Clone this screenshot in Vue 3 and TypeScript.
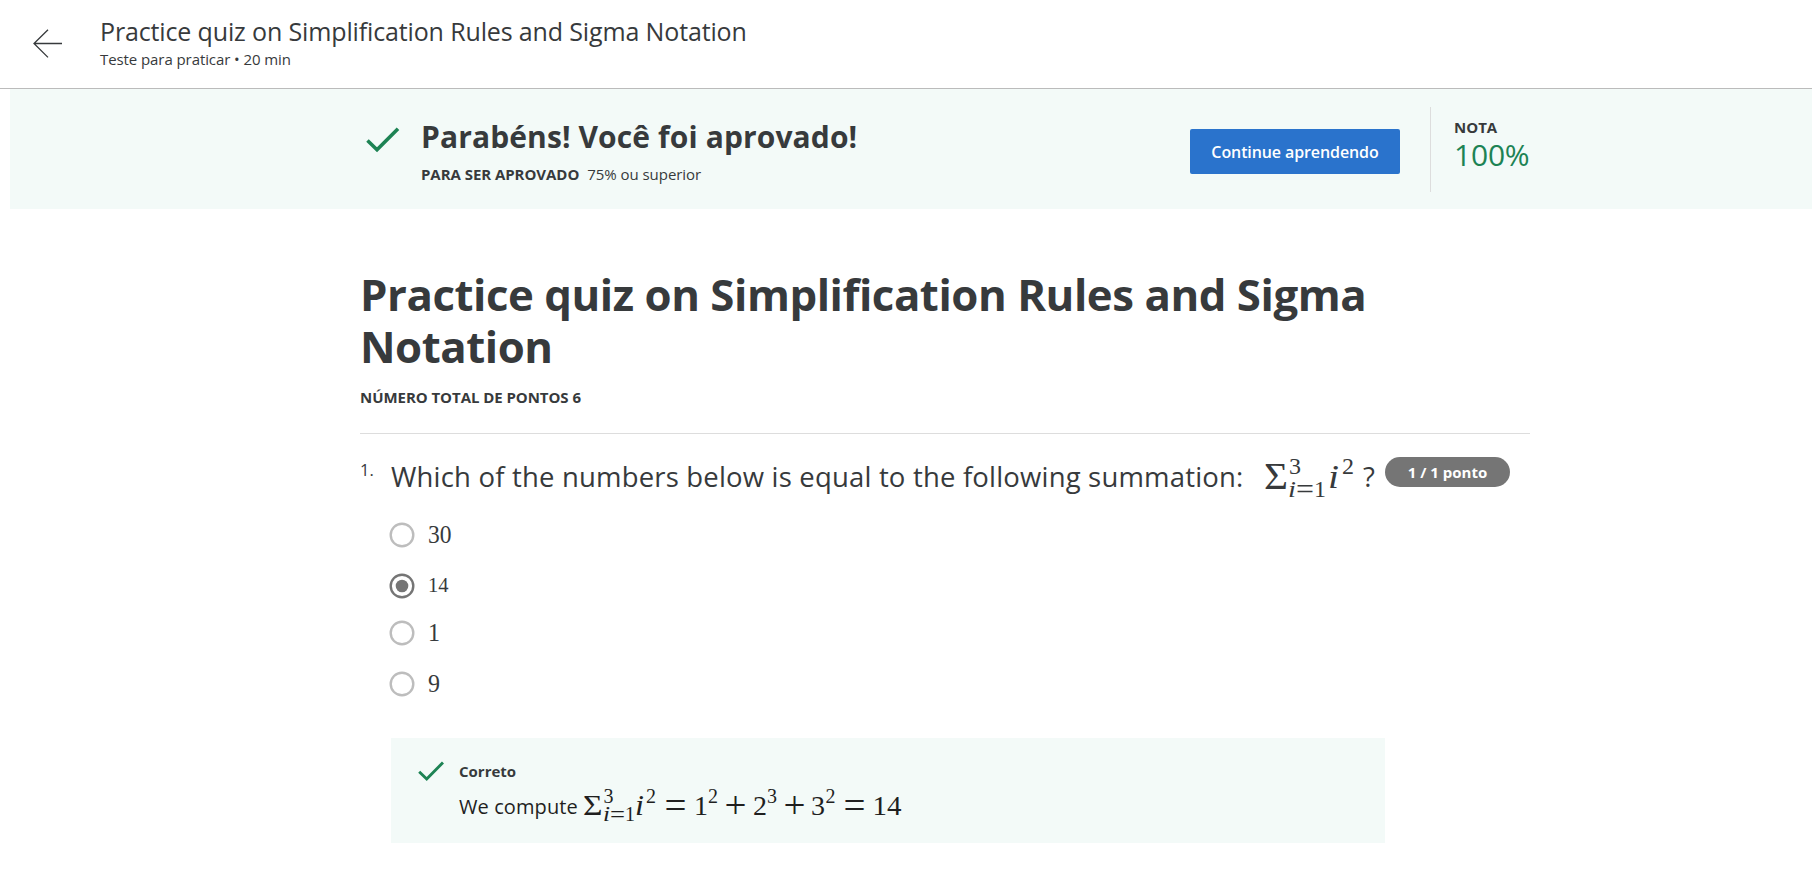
<script setup lang="ts">
interface Glyph {
  text: string
  x: number
  y: number
  size: number
  width?: number
  italic?: boolean
}

interface Choice {
  label: string
  size: number
  width: number
  baseline: number
  selected?: boolean
}

const courseTitle = 'Practice quiz on Simplification Rules and Sigma Notation'

const choices: Choice[] = [
  { label: '30', size: 25.5, width: 23.5, baseline: 28 },
  { label: '14', size: 21, width: 20.5, baseline: 26, selected: true },
  { label: '1', size: 25, width: 12, baseline: 28 },
  { label: '9', size: 25.5, width: 12, baseline: 28 },
]

const questionFormula: Glyph[] = [
  { text: 'Σ', x: 3, y: 33, size: 37, width: 24 },
  { text: '3', x: 28, y: 17.5, size: 23, width: 12 },
  { text: 'i', x: 27, y: 41, size: 23, width: 8, italic: true },
  { text: '=', x: 35, y: 42.5, size: 29, width: 18 },
  { text: '1', x: 53, y: 41, size: 23, width: 12 },
  { text: 'i', x: 67, y: 32, size: 34, width: 11, italic: true },
  { text: '2', x: 81, y: 17.5, size: 23, width: 12 },
]

const answerFormula: Glyph[] = [
  { text: 'Σ', x: 2, y: 36, size: 30, width: 19.5 },
  { text: '3', x: 22.5, y: 24, size: 20, width: 10 },
  { text: 'i', x: 22, y: 42, size: 20, width: 7, italic: true },
  { text: '=', x: 29, y: 44, size: 25, width: 15 },
  { text: '1', x: 44, y: 42, size: 20, width: 10 },
  { text: 'i', x: 54, y: 36, size: 29, width: 9, italic: true },
  { text: '2', x: 65, y: 24, size: 20, width: 10 },
  { text: '=', x: 83.5, y: 39, size: 38, width: 22 },
  { text: '1', x: 113, y: 36, size: 28, width: 14 },
  { text: '2', x: 127, y: 24, size: 20, width: 10 },
  { text: '+', x: 143.5, y: 39, size: 38, width: 22 },
  { text: '2', x: 172, y: 36, size: 28, width: 14 },
  { text: '3', x: 186, y: 24, size: 20, width: 10 },
  { text: '+', x: 202.5, y: 39, size: 38, width: 22 },
  { text: '3', x: 230, y: 36, size: 28, width: 14 },
  { text: '2', x: 244.5, y: 24, size: 20, width: 10 },
  { text: '=', x: 262.5, y: 39, size: 38, width: 22 },
  { text: '14', x: 291.5, y: 36, size: 28, width: 29 },
]
</script>

<template>
  <div class="page">
    <header class="topbar">
      <svg class="back" width="30" height="30" viewBox="0 0 30 30">
        <path d="M29 14.5H1M15 .8L1 14.5L15 28.4" />
      </svg>
      <div class="heading">
        <div class="course">{{ courseTitle }}</div>
        <div class="meta">Teste para praticar • 20 min</div>
      </div>
    </header>

    <section class="banner">
      <svg class="check" width="34" height="26" viewBox="0 0 34 26">
        <path d="M1.5 13.5L11 22.7L32 1.7" />
      </svg>
      <div class="result">
        <div class="congrats">Parabéns! Você foi aprovado!</div>
        <div class="pass"><strong>PARA SER APROVADO</strong><span>75% ou superior</span></div>
      </div>
      <button class="continue" type="button">Continue aprendendo</button>
      <div class="grade">
        <div class="grade-label">NOTA</div>
        <div class="grade-value">100%</div>
      </div>
    </section>

    <main class="quiz">
      <h1>{{ courseTitle }}</h1>
      <div class="points">NÚMERO TOTAL DE PONTOS 6</div>
      <div class="question">
        <span class="number">1.</span>
        <span class="prompt">Which of the numbers below is equal to the following summation:</span>
        <svg class="math question-math" width="98" height="46">
          <text
            v-for="(g, n) in questionFormula" :key="n" :x="g.x" :y="g.y" :font-size="g.size"
            :textLength="g.width" lengthAdjust="spacingAndGlyphs" :class="{ italic: g.italic }"
          >{{ g.text }}</text>
        </svg>
        <span class="mark">?</span>
        <span class="pill">1 / 1 ponto</span>
      </div>

      <ul class="choices">
        <li v-for="c in choices" :key="c.label">
          <svg class="radio" :class="{ selected: c.selected }" width="26" height="26" viewBox="0 0 26 26">
            <circle cx="13" cy="13" r="11.3" class="ring" />
            <circle v-if="c.selected" cx="13" cy="13" r="6.3" class="dot" />
          </svg>
          <svg class="math" width="40" height="40">
            <text
              x="0" :y="c.baseline" :font-size="c.size" :textLength="c.width"
              lengthAdjust="spacingAndGlyphs"
            >{{ c.label }}</text>
          </svg>
        </li>
      </ul>

      <div class="feedback">
        <svg class="check small" width="26" height="21" viewBox="0 0 26 21">
          <path d="M1.2 10.8L8.7 18L25 1.5" />
        </svg>
        <div>
          <div class="correct">Correto</div>
          <div class="explain">
            <span>We compute</span>
            <svg class="math" width="330" height="50">
              <text
                v-for="(g, n) in answerFormula" :key="n" :x="g.x" :y="g.y" :font-size="g.size"
                :textLength="g.width" lengthAdjust="spacingAndGlyphs" :class="{ italic: g.italic }"
              >{{ g.text }}</text>
            </svg>
          </div>
        </div>
      </div>
    </main>
  </div>
</template>

<style>
body {
  margin: 0;
  background: #fff;
}
</style>

<style scoped>
.page {
  box-sizing: border-box;
  height: 874px;
  overflow: hidden;
  font-family: "Open Sans", "Noto Sans", sans-serif;
  color: #373a3c;
  white-space: nowrap;
}
svg {
  display: block;
  flex: none;
  fill: none;
}
.topbar {
  box-sizing: border-box;
  height: 89px;
  display: flex;
  align-items: flex-start;
  padding-left: 33px;
  border-bottom: 1px solid #bbb;
}
.back {
  margin-top: 29px;
  stroke: #373a3c;
  stroke-width: 1.3;
}
.heading {
  margin: 16px 0 0 37px;
}
.course {
  font-size: 25px;
  letter-spacing: -0.14px;
  line-height: 31px;
}
.meta {
  margin-top: 2px;
  font-size: 15px;
  letter-spacing: -0.08px;
  line-height: 20px;
}
.banner {
  box-sizing: border-box;
  height: 120px;
  margin-left: 10px;
  padding-left: 356px;
  display: flex;
  align-items: flex-start;
  background: #f3faf8;
}
.check {
  margin-top: 38px;
  stroke: #1d8354;
  stroke-width: 3.6;
}
.result {
  margin: 30px 0 0 21px;
  width: 769px;
}
.congrats {
  font-size: 30px;
  font-weight: 700;
  letter-spacing: 0.11px;
  line-height: 36px;
}
.pass {
  margin-top: 9px;
  display: flex;
  gap: 8px;
  font-size: 15px;
  letter-spacing: -0.05px;
  line-height: 20px;
}
.pass strong {
  font-weight: 700;
}
.continue {
  width: 210px;
  height: 45px;
  margin-top: 40px;
  padding: 1px 0 0;
  border: 0;
  border-radius: 2px;
  background: #2a73cc;
  color: #fff;
  font: 600 16px/44px "Open Sans", sans-serif;
  letter-spacing: -0.1px;
}
.grade {
  box-sizing: border-box;
  height: 85px;
  margin: 18px 0 0 30px;
  padding: 10px 0 0 23px;
  border-left: 1px solid #ddd;
}
.grade-label {
  font-size: 15px;
  font-weight: 700;
  line-height: 20px;
}
.grade-value {
  margin-top: 1px;
  font-size: 30px;
  letter-spacing: -0.2px;
  line-height: 34px;
  color: #1d8354;
}
.quiz {
  width: 1170px;
  margin-left: 360px;
  padding-top: 59px;
}
h1 {
  margin: 0;
  font-size: 43.75px;
  font-weight: 700;
  letter-spacing: -0.45px;
  line-height: 52px;
  white-space: normal;
}
.points {
  margin-top: 15px;
  padding-bottom: 26px;
  border-bottom: 1px solid #ddd;
  font-size: 15px;
  font-weight: 700;
  letter-spacing: -0.05px;
  line-height: 20px;
}
.question {
  height: 76px;
  padding-top: 22px;
  box-sizing: border-box;
  display: flex;
  align-items: flex-start;
}
.number {
  width: 31px;
  margin-top: -1px;
  font-size: 16.5px;
  line-height: 30px;
}
.prompt {
  width: 870px;
  font-size: 27.5px;
  letter-spacing: 0.18px;
  line-height: 41px;
}
.math {
  overflow: visible;
}
.math text {
  fill: #373a3c;
  font-family: "Liberation Serif", serif;
}
.math .italic {
  font-style: italic;
}
.mark {
  width: 22px;
  margin-left: 4px;
  font-size: 27.5px;
  line-height: 41px;
}
.pill {
  width: 125px;
  height: 30px;
  margin-top: 1px;
  border-radius: 15px;
  background: #757575;
  color: #fff;
  text-align: center;
  font-size: 15px;
  font-weight: 700;
  line-height: 30px;
}
.choices {
  list-style: none;
  margin: 0;
  padding: 0 0 0 29px;
}
.choices li {
  display: flex;
  align-items: center;
  gap: 13px;
  height: 50px;
}
.choices li:nth-child(2) {
  height: 52px;
}
.choices li:nth-child(3) {
  height: 42px;
}
.choices li:nth-child(4) {
  height: 60px;
}
.ring {
  stroke: #bdbdbd;
  stroke-width: 2.4;
}
.selected .ring {
  stroke: #757575;
}
.dot {
  fill: #757575;
}
.feedback {
  box-sizing: border-box;
  width: 994px;
  height: 105px;
  margin: 24px 0 0 31px;
  padding: 23px 0 0 27px;
  display: flex;
  align-items: flex-start;
  background: #f3faf8;
}
.check.small {
  margin: 0 15px 0 0;
  stroke-width: 2.9;
}
.correct {
  font-size: 15px;
  font-weight: 700;
  line-height: 20px;
}
.explain {
  display: flex;
  align-items: flex-start;
  margin-top: -2px;
  color: #1f1f1f;
  font-size: 20px;
}
.explain span {
  width: 122px;
  letter-spacing: 0.1px;
  line-height: 56px;
}
.explain .math text {
  fill: #1f1f1f;
}
</style>
